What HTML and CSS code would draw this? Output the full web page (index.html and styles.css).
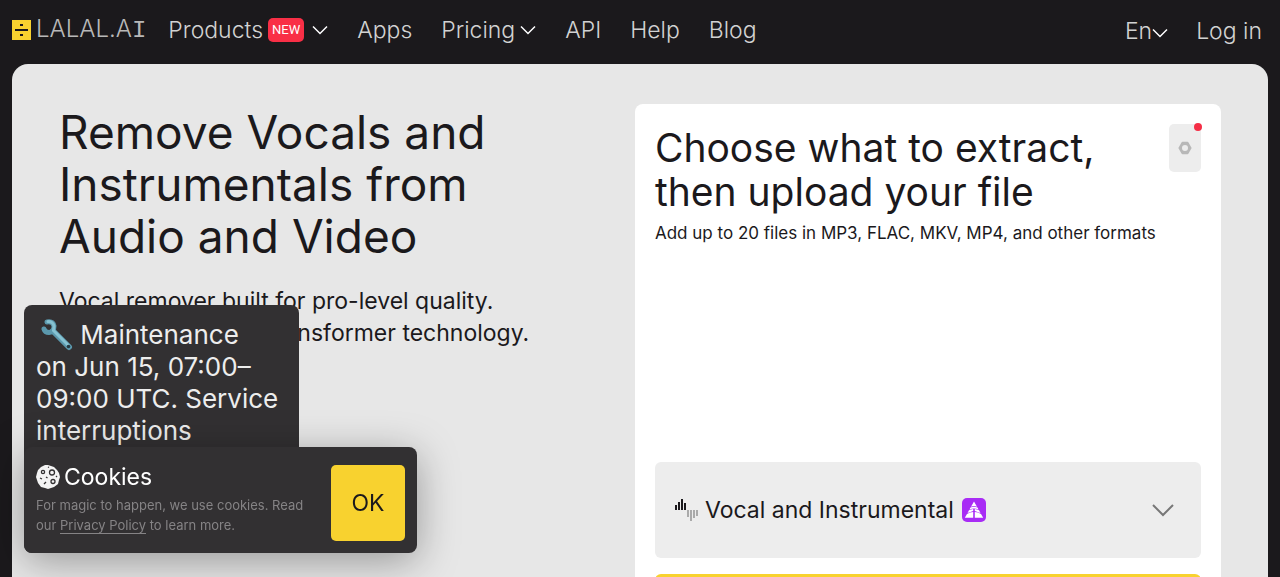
FILE: index.html
```html
<!DOCTYPE html>
<html lang="en">
<head>
    <meta charset="UTF-8">
    <meta name="viewport" content="width=device-width, initial-scale=1.0">
    <title>LALAL.AI: Remove Vocals and Instrumentals</title>
    <link rel="stylesheet" href="styles.css">
</head>
<body>
    <header class="header">
        <a class="logo" href="/" aria-label="LALAL.AI">
            <svg class="logo-mark" viewBox="0 0 19 20" aria-hidden="true">
                <path fill="#f8d22f" d="M0 0h19v20H0z"/>
                <path fill="#1b191c" d="M3 9h13v2H3zM8 4h3v2H8zM8 14h3v2H8z"/>
            </svg>
            <span class="logo-text">LALAL.A<span class="logo-i">I</span></span>
        </a>
        <nav class="nav">
            <a class="nav-products" href="#">Products <span class="badge-new">NEW</span>
                <svg class="chevron" viewBox="0 0 16 10" aria-hidden="true"><path d="M1 1.5l7 7 7-7"/></svg>
            </a>
            <a href="#">Apps</a>
            <a class="nav-pricing" href="#">Pricing
                <svg class="chevron" viewBox="0 0 16 10" aria-hidden="true"><path d="M1 1.5l7 7 7-7"/></svg>
            </a>
            <a href="#">API</a>
            <a href="#">Help</a>
            <a href="#">Blog</a>
        </nav>
        <div class="account">
            <button class="lang" type="button">En<svg class="chevron" viewBox="0 0 16 10" aria-hidden="true"><path d="M1 1.5l7 7 7-7"/></svg></button>
            <a href="#">Log in</a>
        </div>
    </header>

    <main class="main">
        <section class="intro">
            <h1>Remove Vocals and<br>Instrumentals from<br>Audio and Video</h1>
            <p>Vocal remover built for pro-level quality.<br>Powered by neural transformer technology.</p>
        </section>

        <section class="uploader">
            <div class="uploader-head">
                <div>
                    <h2>Choose what to extract,<br>then upload your file</h2>
                    <p>Add up to 20 files in MP3, FLAC, MKV, MP4, and other formats</p>
                </div>
                <button class="settings" type="button" aria-label="Settings">
                    <svg viewBox="0 0 14 14" aria-hidden="true">
                        <path fill="#b8b8b8" fill-rule="evenodd" d="M4.500.8h5q.7 0 1 .6l2.900 5q.3.6 0 1.200l-2.900 5q-.3.6-1 .6h-5q-.7 0-1-.6l-2.900-5q-.3-.6 0-1.200l2.900-5q.3-.6 1-.6zM7 4a3 3 0 1 0 0 6 3 3 0 0 0 0-6z"/>
                    </svg>
                    <span class="settings-dot"></span>
                </button>
            </div>
            <button class="stem" type="button">
                <svg class="stem-icon" viewBox="0 0 24 24" aria-hidden="true">
                    <path stroke="#1b191c" stroke-width="2" d="M1 7v5M4 4v8M7 1v11M10 5v7"/>
                    <path stroke="#aaa" stroke-width="2" d="M13 12v7M16 12v11M19 12v8M22 12v6"/>
                </svg>
                <span>Vocal and Instrumental</span>
                <svg class="stem-badge" viewBox="0 0 24 24" aria-hidden="true">
                    <rect width="24" height="24" rx="5" fill="#a82cf5"/>
                    <path fill="#fff" d="M12 3.500l3 5.200q-3-1.600-6 0zM8.500 9.600q3.500-1.800 7 0l1 1.800q-4.500-2-9 0zM7 12.300q2-1 4.200-1.200v2L5.500 15zM17 12.300q-2-1-4.200-1.200v2l5.700 1.900zM5 16q3-1.800 6.200-2v5.800H2.800zM19 16q-3-1.800-6.200-2v5.800h8.400z"/>
                </svg>
                <svg class="stem-chevron" viewBox="0 0 24 14" aria-hidden="true"><path d="M2 2l10 10L22 2"/></svg>
            </button>
            <button class="upload" type="button" aria-label="Select files"></button>
        </section>
    </main>

    <aside class="notice">
        <svg class="wrench" viewBox="0 0 32 32" role="img" aria-label="Wrench">
            <g fill="none" stroke-linecap="round">
                <path stroke="#5b98ad" stroke-width="5" d="M6 3q6-1 7 4 0 6-5 6.500-4 0-5-3.500"/>
                <path stroke="#5b98ad" stroke-width="6" d="M12 12l16 16"/>
                <path stroke="#86c2d2" stroke-width="3" d="M7 2.500q5 0 6 4.500l-.5 4.500L27 26"/>
            </g>
            <circle cx="27.500" cy="27.500" r="1.800" fill="#263a43"/>
        </svg>
        Maintenance on&nbsp;Jun&nbsp;15, 07:00–09:00 UTC. Service interruptions
    </aside>

    <aside class="cookies">
        <div class="cookies-body">
            <h3>
                <svg class="cookie" viewBox="0 0 24 24" aria-hidden="true">
                    <path fill="#f3f3f3" d="M12 0l3 1 3 1 3 3 2 3 1 4-1 3-1 4-4 3-3 1-3 1-3-1-4-1-3-4-1-3-1-3 1-4 1-3 3-3 4-2z"/>
                    <g fill="none" stroke="#323032" stroke-width="1.300">
                        <circle cx="7" cy="7" r="1.600"/>
                        <circle cx="16" cy="7.500" r="2.500"/>
                        <circle cx="17" cy="16.500" r="2"/>
                        <path d="M4 13l2 1M10 12l1.500 1M8 19l2-2M20 11l1 1M12 2l1 .5"/>
                    </g>
                </svg>
                Cookies
            </h3>
            <p>For magic to happen, we use cookies. Read<br>our <a href="#">Privacy Policy</a> to learn more.</p>
        </div>
        <button class="cookies-ok" type="button">OK</button>
    </aside>
</body>
</html>
```
FILE: styles.css
```css
* {
    box-sizing: border-box;
}

body {
    display: flex;
    flex-direction: column;
    height: 100vh;
    margin: 0;
    overflow: hidden;
    background: #1b191c;
    color: #1b191c;
    font-family: "Inter", "Liberation Sans", sans-serif;
    font-weight: 400;
}

h1, h2, h3, p {
    margin: 0;
    font-weight: 400;
}

a {
    color: inherit;
    text-decoration: none;
}

button {
    border: 0;
    padding: 0;
    background: none;
    color: inherit;
    font: inherit;
    cursor: pointer;
}

/* Header */
.header {
    display: flex;
    flex: none;
    align-items: center;
    height: 64px;
    padding: 0 18px 4px 12px;
    color: #d2d2d2;
    font-size: 23px;
    font-weight: 300;
    line-height: 32px;
    white-space: nowrap;
}

.logo {
    display: flex;
    align-items: center;
    gap: 5px;
    color: #b8b8b8;
    font-size: 24px;
}

.logo-mark {
    width: 19px;
    height: 20px;
}

.logo-i {
    font-family: "Liberation Mono", monospace;
}

.nav {
    display: flex;
    gap: 29px;
    margin-left: 22px;
}

.nav a {
    display: flex;
    align-items: center;
    gap: 5px;
}

.badge-new {
    padding: 0 4px;
    border-radius: 5px;
    background: #f92f46;
    color: #fff;
    font-family: Roboto, sans-serif;
    font-size: 13px;
    font-weight: 400;
    line-height: 24px;
}

.chevron {
    width: 16px;
    height: 10px;
    fill: none;
    stroke: #fff;
    stroke-width: 1.5;
}

.nav-products .chevron {
    margin-left: 3px;
}

.account {
    display: flex;
    gap: 28px;
    margin-left: auto;
    padding-top: 2px;
}

.lang {
    display: flex;
    align-items: center;
}

.lang .chevron {
    margin-top: 4px;
}

/* Main area */
.main {
    display: grid;
    flex: 1;
    grid-template-columns: 57fr 58fr;
    align-items: start;
    min-height: 0;
    margin: 0 12px;
    padding: 40px 47px 0;
    overflow: hidden;
    border-radius: 16px 16px 0 0;
    background: #e7e7e7;
}

.intro h1 {
    padding-top: 2px;
    font-size: 46px;
    line-height: 52px;
}

.intro p {
    margin-top: 23px;
    font-size: 23px;
    line-height: 32px;
}

.uploader {
    padding: 20px;
    border-radius: 8px;
    background: #fff;
}

.uploader-head {
    display: flex;
    justify-content: space-between;
    height: 338px;
}

.uploader h2 {
    padding-top: 2px;
    font-size: 39px;
    line-height: 44px;
}

.uploader p {
    margin-top: 7px;
    font-size: 17px;
    line-height: 24px;
}

.settings {
    position: relative;
    display: flex;
    flex: none;
    align-items: center;
    justify-content: center;
    width: 32px;
    height: 48px;
    border-radius: 5px;
    background: #ededed;
}

.settings svg {
    width: 14px;
    height: 14px;
}

.settings-dot {
    position: absolute;
    top: -1px;
    right: -1px;
    width: 8px;
    height: 8px;
    border-radius: 50%;
    background: #f52e46;
}

.stem {
    display: flex;
    align-items: center;
    width: 100%;
    height: 96px;
    padding: 0 26px 0 20px;
    border-radius: 6px;
    background: #ededed;
    font-size: 23px;
}

.stem-icon {
    width: 24px;
    height: 24px;
    margin-right: 6px;
}

.stem-badge {
    width: 24px;
    height: 24px;
    margin-left: 8px;
}

.stem-chevron {
    width: 24px;
    height: 14px;
    margin-left: auto;
    fill: none;
    stroke: #777;
    stroke-width: 2;
}

.upload {
    width: 100%;
    height: 72px;
    margin-top: 16px;
    border-radius: 6px;
    background: #f8d22f;
}

/* Floating messages */
.notice {
    position: fixed;
    bottom: 24px;
    left: 24px;
    width: 275px;
    height: 248px;
    padding: 14px 12px;
    overflow: hidden;
    border-radius: 8px;
    background: #323032;
    color: #ededed;
    font-size: 26px;
    line-height: 32px;
}

.wrench {
    width: 32px;
    height: 32px;
    margin-left: 5px;
    vertical-align: bottom;
}

.cookies {
    position: fixed;
    bottom: 24px;
    left: 24px;
    display: flex;
    align-items: flex-start;
    gap: 20px;
    width: 393px;
    height: 106px;
    padding: 18px 12px 12px;
    border-radius: 8px;
    background: #323032;
    box-shadow: 0 8px 40px rgba(0, 0, 0, 0.35);
    color: #fff;
}

.cookies-body {
    flex: 1;
}

.cookies h3 {
    display: flex;
    align-items: center;
    gap: 4px;
    font-size: 23px;
    line-height: 24px;
}

.cookie {
    width: 24px;
    height: 24px;
}

.cookies p {
    margin-top: 6px;
    color: #858385;
    font-size: 13px;
    line-height: 20px;
    white-space: nowrap;
}

.cookies p a {
    border-bottom: 1px solid #858385;
}

.cookies-ok {
    width: 74px;
    height: 76px;
    border-radius: 5px;
    background: #f8d22f;
    color: #1b191c;
    font-size: 23px;
}
```
